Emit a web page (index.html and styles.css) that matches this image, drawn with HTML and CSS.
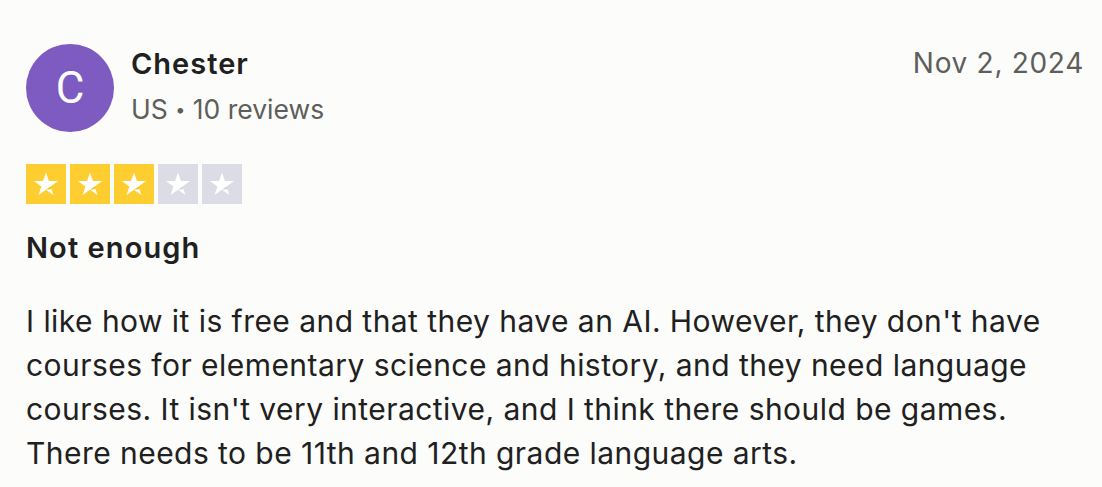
FILE: index.html
```html
<!DOCTYPE html>
<html lang="en">
<head>
<meta charset="utf-8">
<link rel="stylesheet" href="styles.css">
</head>
<body>
<article class="review">
  <header class="head">
    <div class="user">
      <div class="avatar">C</div>
      <div class="meta">
        <div class="name">Chester</div>
        <div class="sub">US <span class="dot">•</span> 10 reviews</div>
      </div>
    </div>
    <time class="date">Nov 2, 2024</time>
  </header>
  <div class="stars">
    <span class="star on"><svg viewBox="0 0 40 40"><path d="M20 8.5l2.9 8.6h9.1l-7.4 5.3 2.8 8.6L20 25.7l-7.4 5.3 2.8-8.6-7.4-5.3h9.1z" fill="#fff"/><path d="M24.6 22.4l0.8 2.6-5.4 0.7z" fill="#f2c200"/></svg></span>
    <span class="star on"><svg viewBox="0 0 40 40"><path d="M20 8.5l2.9 8.6h9.1l-7.4 5.3 2.8 8.6L20 25.7l-7.4 5.3 2.8-8.6-7.4-5.3h9.1z" fill="#fff"/><path d="M24.6 22.4l0.8 2.6-5.4 0.7z" fill="#f2c200"/></svg></span>
    <span class="star on"><svg viewBox="0 0 40 40"><path d="M20 8.5l2.9 8.6h9.1l-7.4 5.3 2.8 8.6L20 25.7l-7.4 5.3 2.8-8.6-7.4-5.3h9.1z" fill="#fff"/><path d="M24.6 22.4l0.8 2.6-5.4 0.7z" fill="#f2c200"/></svg></span>
    <span class="star off"><svg viewBox="0 0 40 40"><path d="M20 8.5l2.9 8.6h9.1l-7.4 5.3 2.8 8.6L20 25.7l-7.4 5.3 2.8-8.6-7.4-5.3h9.1z" fill="#fff"/><path d="M24.6 22.4l0.8 2.6-5.4 0.7z" fill="#d0d0da"/></svg></span>
    <span class="star off"><svg viewBox="0 0 40 40"><path d="M20 8.5l2.9 8.6h9.1l-7.4 5.3 2.8 8.6L20 25.7l-7.4 5.3 2.8-8.6-7.4-5.3h9.1z" fill="#fff"/><path d="M24.6 22.4l0.8 2.6-5.4 0.7z" fill="#d0d0da"/></svg></span>
  </div>
  <h2 class="title">Not enough</h2>
  <p class="body">I like how it is free and that they have an AI. However, they don't have courses for elementary science and history, and they need language courses. It isn't very interactive, and I think there should be games. There needs to be 11th and 12th grade language arts.</p>
</article>
</body>
</html>
```
FILE: styles.css
```css
html, body {
  margin: 0;
  padding: 0;
  background: #fcfcfa;
}
body {
  font-family: Inter, "Liberation Sans", sans-serif;
  color: #20201e;
}
.review {
  padding: 44px 18px 0 26px;
}
.head {
  display: flex;
  justify-content: space-between;
  align-items: flex-start;
}
.user {
  display: flex;
  align-items: center;
  gap: 17px;
}
.avatar {
  width: 88px;
  height: 88px;
  border-radius: 50%;
  background: #7d5bc1;
  color: #fff;
  font-family: Roboto, sans-serif;
  font-size: 44px;
  display: flex;
  align-items: center;
  justify-content: center;
}
.meta {
  display: flex;
  flex-direction: column;
  gap: 11px;
  margin-top: -4px;
}
.name {
  font-size: 29px;
  font-weight: 600;
  line-height: 36px;
  letter-spacing: 1px;
}
.sub {
  font-size: 26.5px;
  line-height: 32px;
  color: #5e5e5a;
}
.dot {
  font-size: 18px;
  vertical-align: 3px;
}
.date {
  font-size: 28px;
  line-height: 36px;
  color: #5e5e5a;
  margin-top: 1px;
  letter-spacing: 0.7px;
}
.stars {
  display: flex;
  gap: 4px;
  margin-top: 32px;
}
.star {
  width: 40px;
  height: 40px;
  display: block;
}
.star svg {
  width: 40px;
  height: 40px;
  display: block;
}
.star.on { background: #fecd2f; }
.star.off { background: #dcdce6; }
.title {
  margin: 26px 0 0;
  font-size: 29px;
  font-weight: 600;
  line-height: 36px;
  letter-spacing: 1.1px;
}
.body {
  margin: 33px 0 0;
  font-size: 30px;
  line-height: 44px;
  letter-spacing: 0.45px;
  max-width: 1060px;
}
```
